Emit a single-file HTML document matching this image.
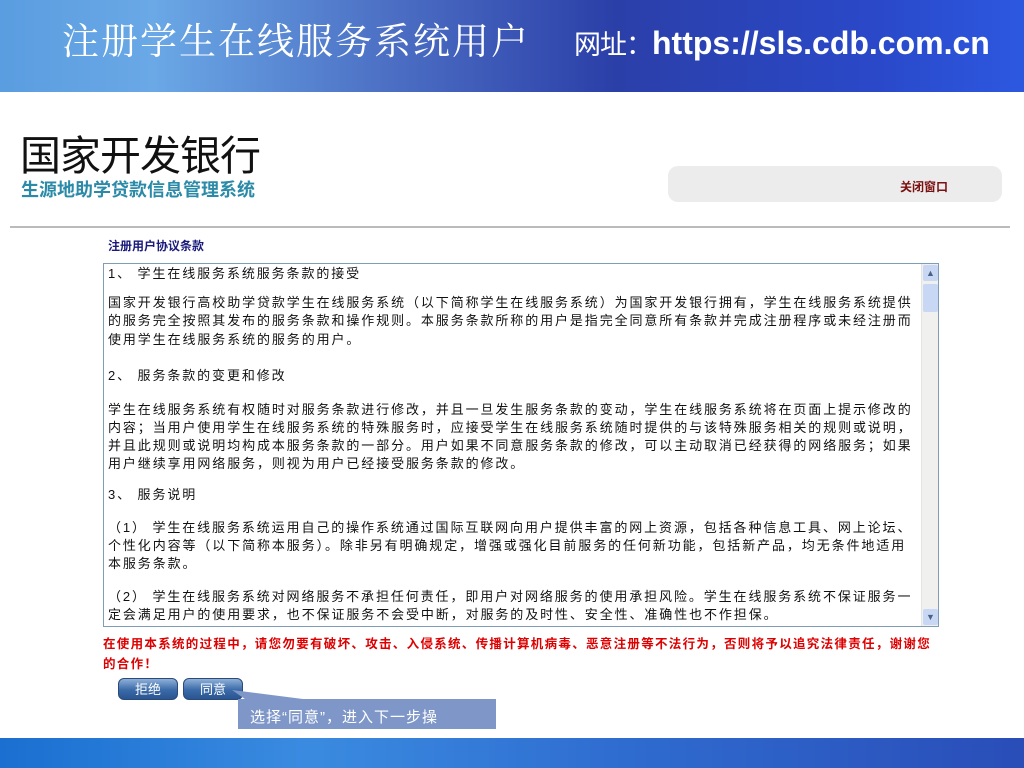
<!DOCTYPE html>
<html><head><meta charset="utf-8"><style>
*{margin:0;padding:0;box-sizing:border-box}
body{width:1024px;height:768px;overflow:hidden;position:relative;background:#fff;font-family:"Liberation Sans","Noto Sans CJK SC",sans-serif}
.top{position:absolute;left:0;top:0;width:1024px;height:92px;background:linear-gradient(90deg,#5a9de0 0%,#6aa8e6 15%,#4c6fc4 38%,#2b3fa8 60%,#2a48c8 85%,#2c58e0 100%)}
.t1{position:absolute;left:62px;top:16px;font-size:37px;line-height:1.2;color:#fff;font-family:"Noto Serif CJK SC",serif;white-space:nowrap;letter-spacing:2px}
.t2{position:absolute;left:574px;top:24px;font-size:32px;line-height:1.2;color:#fff;font-weight:bold;white-space:nowrap}
.t2 span{font-weight:normal;font-size:27px;letter-spacing:-1px}
.bot{position:absolute;left:0;top:738px;width:1024px;height:30px;background:linear-gradient(90deg,#1a6fd0,#3a8be0 30%,#2f6dd0 60%,#2a4db8)}
.abs{position:absolute;white-space:nowrap}
.box{position:absolute;left:103px;top:263px;width:836px;height:364px;border:1px solid #7f9db9;background:#fff}
.sb{position:absolute;right:0;top:0;width:17px;height:100%;background:#f0f0ee;border-left:1px solid #e4e4e0}
.ln{position:absolute;left:4px;font-size:13px;line-height:16px;color:#111;white-space:nowrap;letter-spacing:1.9px}
.btn{position:absolute;top:678px;width:60px;height:22px;border-radius:6px;background:linear-gradient(#8fb0d8,#3a6aa8 55%,#2a5590);color:#fff;font-size:13px;text-align:center;line-height:21px;border:1px solid #2a4a7a}
.warn{position:absolute;left:103px;font-size:12.5px;color:#d00;font-weight:bold;white-space:nowrap;letter-spacing:1.3px}
</style></head><body>
<div class="top"><div class="t1">注册学生在线服务系统用户</div><div class="t2"><span>网址：</span>https://sls.cdb.com.cn</div></div>
<div class="abs" style="left:20px;top:131px;font-size:41px;line-height:50px;color:#111;letter-spacing:-1px">国家开发银行</div>
<div class="abs" style="left:21px;top:179px;font-size:18px;line-height:22px;color:#2a8aa8;font-weight:bold">生源地助学贷款信息管理系统</div>
<div class="abs" style="left:668px;top:166px;width:334px;height:36px;border-radius:10px;background:#ececec"></div>
<div class="abs" style="left:900px;top:178px;font-size:12px;color:#7a1010;font-weight:bold">关闭窗口</div>
<div class="abs" style="left:10px;top:226px;width:1000px;height:2px;background:#bbb"></div>
<div class="abs" style="left:108px;top:237px;font-size:12px;color:#1a1a7a;font-weight:bold">注册用户协议条款</div>
<div class="box">
<div class="ln" style="top:2px">1、  学生在线服务系统服务条款的接受</div>
<div class="ln" style="top:31px">国家开发银行高校助学贷款学生在线服务系统（以下简称学生在线服务系统）为国家开发银行拥有，学生在线服务系统提供</div>
<div class="ln" style="top:49px">的服务完全按照其发布的服务条款和操作规则。本服务条款所称的用户是指完全同意所有条款并完成注册程序或未经注册而</div>
<div class="ln" style="top:68px">使用学生在线服务系统的服务的用户。</div>
<div class="ln" style="top:104px">2、  服务条款的变更和修改</div>
<div class="ln" style="top:138px">学生在线服务系统有权随时对服务条款进行修改，并且一旦发生服务条款的变动，学生在线服务系统将在页面上提示修改的</div>
<div class="ln" style="top:156px">内容；当用户使用学生在线服务系统的特殊服务时，应接受学生在线服务系统随时提供的与该特殊服务相关的规则或说明，</div>
<div class="ln" style="top:174px">并且此规则或说明均构成本服务条款的一部分。用户如果不同意服务条款的修改，可以主动取消已经获得的网络服务；如果</div>
<div class="ln" style="top:192px">用户继续享用网络服务，则视为用户已经接受服务条款的修改。</div>
<div class="ln" style="top:223px">3、  服务说明</div>
<div class="ln" style="top:256px">（1） 学生在线服务系统运用自己的操作系统通过国际互联网向用户提供丰富的网上资源，包括各种信息工具、网上论坛、</div>
<div class="ln" style="top:274px">个性化内容等（以下简称本服务）。除非另有明确规定，增强或强化目前服务的任何新功能，包括新产品，均无条件地适用</div>
<div class="ln" style="top:292px">本服务条款。</div>
<div class="ln" style="top:325px">（2） 学生在线服务系统对网络服务不承担任何责任，即用户对网络服务的使用承担风险。学生在线服务系统不保证服务一</div>
<div class="ln" style="top:343px">定会满足用户的使用要求，也不保证服务不会受中断，对服务的及时性、安全性、准确性也不作担保。</div>
<div class="sb"><div style="position:absolute;top:1px;left:1px;width:15px;height:16px;background:#c8d8f4;border-radius:2px;color:#4d6185;font-size:9px;text-align:center;line-height:16px">▲</div><div style="position:absolute;top:20px;left:1px;width:15px;height:28px;background:#c8d8f4;border-radius:2px"></div><div style="position:absolute;bottom:1px;left:1px;width:15px;height:16px;background:#c8d8f4;border-radius:2px;color:#4d6185;font-size:9px;text-align:center;line-height:16px">▼</div></div>
</div>
<div class="warn" style="top:633px">在使用本系统的过程中，请您勿要有破坏、攻击、入侵系统、传播计算机病毒、恶意注册等不法行为，否则将予以追究法律责任，谢谢您</div>
<div class="warn" style="top:653px">的合作！</div>
<div class="btn" style="left:118px">拒绝</div>
<div class="btn" style="left:183px">同意</div>
<svg class="abs" style="left:232px;top:686px" width="120" height="20"><polygon points="0,4 110,18 20,18" fill="#7f97c8"/></svg>
<div class="abs" style="left:238px;top:699px;width:258px;height:30px;background:#7f97c8"></div>
<div class="abs" style="left:250px;top:706px;font-size:15px;color:#fff;letter-spacing:1px">选择“同意”，进入下一步操</div>
<div class="abs" style="left:250px;top:727px;font-size:15px;color:#fff;height:10px;overflow:hidden">作。</div>
<div class="bot"></div>
</body></html>
